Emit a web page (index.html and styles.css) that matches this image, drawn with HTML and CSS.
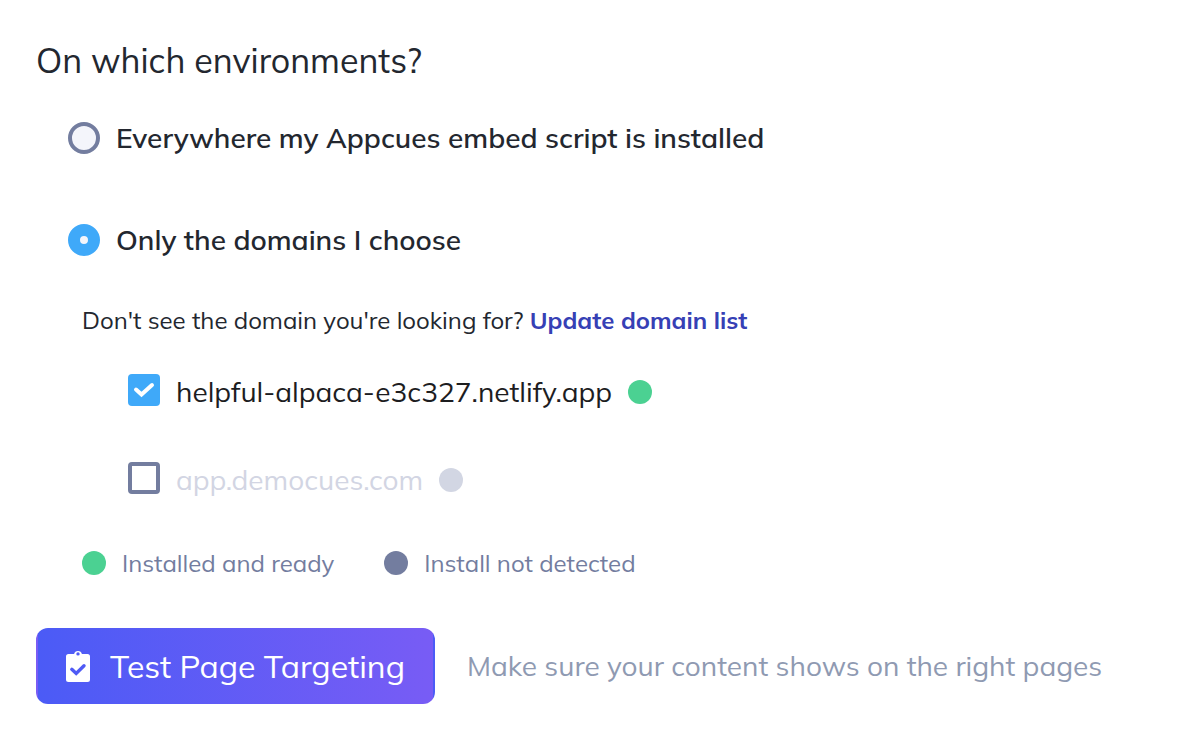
FILE: index.html
```html
<!DOCTYPE html>
<html lang="en">
<head>
    <meta charset="UTF-8">
    <meta name="viewport" content="width=device-width, initial-scale=1">
    <title>Page Targeting</title>
    <link rel="stylesheet" href="styles.css">
</head>
<body>
    <main class="targeting">
        <form>
            <fieldset class="environments">
                <legend class="title">On which environments?</legend>

                <label class="option">
                    <input type="radio" class="radio" name="environment" value="all">
                    <span>Everywhere my Appcues embed script is installed</span>
                </label>
                <label class="option">
                    <input type="radio" class="radio" name="environment" value="domains" checked>
                    <span>Only the domains I choose</span>
                </label>

                <div class="domains">
                    <p class="hint">Don't see the domain you're looking for? <a href="#">Update domain list</a></p>

                    <ul class="domain-list">
                        <li>
                            <label class="domain">
                                <input type="checkbox" class="checkbox" name="domain" checked>
                                <span>helpful-alpaca-e3c327.netlify.app</span>
                                <span class="dot dot-ready"></span>
                            </label>
                        </li>
                        <li>
                            <label class="domain domain-missing">
                                <input type="checkbox" class="checkbox" name="domain">
                                <span>app.democues.com</span>
                                <span class="dot dot-faded"></span>
                            </label>
                        </li>
                    </ul>

                    <div class="key">
                        <span class="key-item"><span class="dot dot-ready"></span>Installed and ready</span>
                        <span class="key-item"><span class="dot dot-undetected"></span>Install not detected</span>
                    </div>
                </div>
            </fieldset>

            <div class="actions">
                <button type="button" class="test-button">
                    <svg class="clipboard" viewBox="0 0 24 32" aria-hidden="true">
                        <path fill="#fff" fill-rule="evenodd" d="M2.500 4h5.600a4 4 0 0 1 7.800 0h5.600A2.500 2.500 0 0 1 24 6.500v23a2.500 2.500 0 0 1-2.500 2.500h-19A2.500 2.500 0 0 1 0 29.500v-23A2.500 2.500 0 0 1 2.500 4zM12 2.200a1.700 1.700 0 1 0 0 3.400a1.700 1.700 0 0 0 0-3.400z"/>
                        <path fill="none" stroke="#4f5bf5" stroke-width="3.400" stroke-linecap="round" d="M5.800 19.300l4.400 4.200 7.800-7.700"/>
                    </svg>
                    Test Page Targeting
                </button>
                <p class="note">Make sure your content shows on the right pages</p>
            </div>
        </form>
    </main>
</body>
</html>
```

FILE: styles.css
```css
* {
    box-sizing: border-box;
}
body {
    margin: 0;
    background-color: #fff;
    color: #23272f;
    font-family: Mulish, Lato, "Open Sans", sans-serif;
    font-size: 28px;
    line-height: 36px;
}
p,
ul {
    margin: 0;
    padding: 0;
}
.targeting {
    padding: 36px;
}
.environments {
    margin: 0;
    padding: 0;
    border: 0;
    min-width: 0;
}
.title {
    padding: 0;
    margin-bottom: 34px;
    font-size: 34px;
    line-height: 50px;
}
.option {
    display: flex;
    align-items: center;
    gap: 16px;
    margin-left: 32px;
    font-weight: 600;
}
.option + .option {
    margin-top: 66px;
}
.radio,
.checkbox {
    appearance: none;
    flex: none;
    width: 32px;
    height: 32px;
    margin: 0;
    border: 4px solid #737d9f;
    cursor: pointer;
}
.radio {
    border-radius: 50%;
    background-color: #f4f5fb;
}
.radio:checked {
    border: 12px solid #3fa9f9;
}
.checkbox {
    border-radius: 4px;
    background-color: #fff;
}
.checkbox:checked {
    border: 0;
    background: #3fa9f9 url("data:image/svg+xml,%3Csvg xmlns='http://www.w3.org/2000/svg' viewBox='0 0 32 32'%3E%3Cpath d='M8 15.500l5.500 5 10.500-9.500' fill='none' stroke='%23fff' stroke-width='4' stroke-linecap='round'/%3E%3C/svg%3E");
}
.domains {
    margin: 44px 0 0 46px;
}
.hint {
    margin-bottom: 36px;
    font-size: 24px;
}
.hint a {
    color: #3640b5;
    font-weight: 700;
    text-decoration: none;
}
.domain-list {
    margin-left: 46px;
    list-style: none;
}
.domain-list li + li {
    margin-top: 52px;
}
.domain {
    display: flex;
    align-items: flex-start;
    gap: 16px;
    color: #1d1d1f;
}
.domain-missing {
    color: #d2d5e3;
}
.dot {
    flex: none;
    align-self: center;
    width: 24px;
    height: 24px;
    border-radius: 50%;
}
.dot-ready {
    background-color: #4bd192;
}
.dot-faded {
    background-color: #d2d6e3;
}
.dot-undetected {
    background-color: #737d9f;
}
.key {
    display: flex;
    gap: 50px;
    margin-top: 47px;
    color: #737d9f;
    font-size: 24px;
}
.key-item {
    display: flex;
    align-items: center;
    gap: 16px;
}
.actions {
    display: flex;
    align-items: center;
    gap: 32px;
    margin-top: 47px;
}
.test-button {
    display: flex;
    align-items: center;
    gap: 20px;
    padding: 16px 28px;
    border: 2px solid transparent;
    border-radius: 12px;
    background-image: linear-gradient(90deg, #4b5bf6, #785cf5);
    color: #fff;
    font: inherit;
    font-size: 32px;
    line-height: 40px;
    cursor: pointer;
}
.clipboard {
    width: 24px;
    height: 32px;
}
.note {
    color: #8f9ab2;
}
```
